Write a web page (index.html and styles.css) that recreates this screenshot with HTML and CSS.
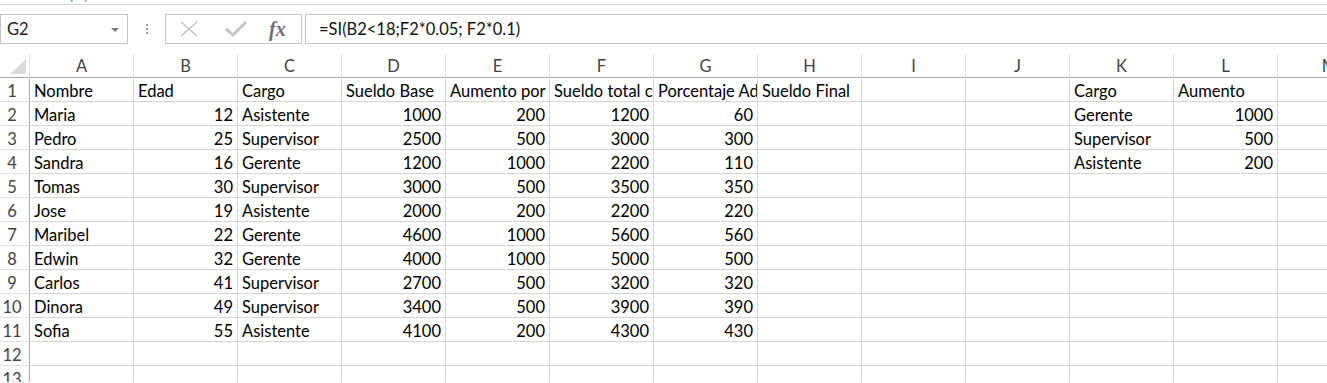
FILE: index.html
```
<html>
<head>
<link rel="stylesheet" href="styles.css">
</head>
<body>
<div class="ribbonEdge"><span class="ribbonLabel">Portapapeles</span></div>

<div class="formulaBar">
  <div class="nameBox">G2<span class="nameArrow"></span></div>
  <div class="grip"><span></span><span></span><span></span></div>
  <div class="fxBox">
    <svg class="fxIcon" width="18" height="16" viewBox="0 0 18 16"><path d="M1 1 L17 15 M17 1 L1 15" stroke="#c4c4c4" stroke-width="1.6" fill="none"/></svg>
    <svg class="fxIcon" width="22" height="16" viewBox="0 0 22 16"><path d="M1 8 L8 14 L21 1" stroke="#c4c4c4" stroke-width="3" fill="none"/></svg>
    <span class="fxText">fx</span>
  </div>
  <div class="formulaInput">=SI(B2&lt;18;F2*0.05; F2*0.1)</div>
</div>

<div class="sheetWrap">
<table class="sheet">
<tr class="colHeads"><th class="corner"><span class="cornerTri"></span></th><th>A</th><th>B</th><th>C</th><th>D</th><th>E</th><th>F</th><th>G</th><th>H</th><th>I</th><th>J</th><th>K</th><th>L</th><th>M</th></tr>
<tr><th class="rowHead">1</th><td>Nombre</td><td>Edad</td><td>Cargo</td><td>Sueldo Base</td><td>Aumento por cargo</td><td>Sueldo total con aumento</td><td>Porcentaje Adicional</td><td>Sueldo Final</td><td></td><td></td><td>Cargo</td><td>Aumento</td><td></td></tr>
<tr><th class="rowHead">2</th><td>Maria</td><td class="num">12</td><td>Asistente</td><td class="num">1000</td><td class="num">200</td><td class="num">1200</td><td class="num">60</td><td></td><td></td><td></td><td>Gerente</td><td class="num">1000</td><td></td></tr>
<tr><th class="rowHead">3</th><td>Pedro</td><td class="num">25</td><td>Supervisor</td><td class="num">2500</td><td class="num">500</td><td class="num">3000</td><td class="num">300</td><td></td><td></td><td></td><td>Supervisor</td><td class="num">500</td><td></td></tr>
<tr><th class="rowHead">4</th><td>Sandra</td><td class="num">16</td><td>Gerente</td><td class="num">1200</td><td class="num">1000</td><td class="num">2200</td><td class="num">110</td><td></td><td></td><td></td><td>Asistente</td><td class="num">200</td><td></td></tr>
<tr><th class="rowHead">5</th><td>Tomas</td><td class="num">30</td><td>Supervisor</td><td class="num">3000</td><td class="num">500</td><td class="num">3500</td><td class="num">350</td><td></td><td></td><td></td><td></td><td></td><td></td></tr>
<tr><th class="rowHead">6</th><td>Jose</td><td class="num">19</td><td>Asistente</td><td class="num">2000</td><td class="num">200</td><td class="num">2200</td><td class="num">220</td><td></td><td></td><td></td><td></td><td></td><td></td></tr>
<tr><th class="rowHead">7</th><td>Maribel</td><td class="num">22</td><td>Gerente</td><td class="num">4600</td><td class="num">1000</td><td class="num">5600</td><td class="num">560</td><td></td><td></td><td></td><td></td><td></td><td></td></tr>
<tr><th class="rowHead">8</th><td>Edwin</td><td class="num">32</td><td>Gerente</td><td class="num">4000</td><td class="num">1000</td><td class="num">5000</td><td class="num">500</td><td></td><td></td><td></td><td></td><td></td><td></td></tr>
<tr><th class="rowHead">9</th><td>Carlos</td><td class="num">41</td><td>Supervisor</td><td class="num">2700</td><td class="num">500</td><td class="num">3200</td><td class="num">320</td><td></td><td></td><td></td><td></td><td></td><td></td></tr>
<tr><th class="rowHead">10</th><td>Dinora</td><td class="num">49</td><td>Supervisor</td><td class="num">3400</td><td class="num">500</td><td class="num">3900</td><td class="num">390</td><td></td><td></td><td></td><td></td><td></td><td></td></tr>
<tr><th class="rowHead">11</th><td>Sofia</td><td class="num">55</td><td>Asistente</td><td class="num">4100</td><td class="num">200</td><td class="num">4300</td><td class="num">430</td><td></td><td></td><td></td><td></td><td></td><td></td></tr>
<tr><th class="rowHead">12</th><td></td><td></td><td></td><td></td><td></td><td></td><td></td><td></td><td></td><td></td><td></td><td></td><td></td></tr>
<tr><th class="rowHead">13</th><td></td><td></td><td></td><td></td><td></td><td></td><td></td><td></td><td></td><td></td><td></td><td></td><td></td></tr>
</table>
</div>
</body>
</html>
```

FILE: styles.css
```
* {
    box-sizing: border-box;
}

body {
    margin: 0;
    background-color: #ffffff;
    font-family: Lato, "Liberation Sans", sans-serif;
    overflow: hidden;
}

/* bottom of the ribbon, cut off by the screenshot */
.ribbonEdge {
    height: 5px;
    overflow: hidden;
    border-bottom: 1px solid #d4d4d4;
}

.ribbonLabel {
    display: block;
    margin-top: -13px;
    margin-left: 40px;
    font-family: "Open Sans", sans-serif;
    font-size: 12px;
    line-height: 16px;
    color: #666666;
}

.formulaBar {
    display: flex;
    height: 30px;
    margin-top: 9px;
}

.nameBox {
    position: relative;
    width: 128px;
    border: 1px solid #c6c6c6;
    padding-left: 6px;
    font-size: 16.5px;
    line-height: 28px;
    color: #222222;
}

.nameArrow {
    position: absolute;
    right: 8px;
    top: 13px;
    border-left: 4px solid transparent;
    border-right: 4px solid transparent;
    border-top: 4px solid #7a7a7a;
}

.grip {
    width: 37px;
    display: flex;
    flex-direction: column;
    align-items: center;
    justify-content: center;
    gap: 2px;
}

.grip span {
    width: 2px;
    height: 2px;
    background-color: #a0a0a0;
}

.fxBox {
    width: 137px;
    border: 1px solid #c6c6c6;
    display: flex;
    align-items: center;
    padding-left: 14px;
    gap: 27px;
}

.fxIcon {
    display: block;
}

.fxText {
    margin-left: -5px;
    font-family: "Liberation Serif", serif;
    font-style: italic;
    font-weight: bold;
    font-size: 20px;
    color: #707070;
}

.formulaInput {
    flex: 1;
    margin-left: 3px;
    border: 1px solid #c6c6c6;
    border-right: none;
    padding-left: 13px;
    font-size: 16.5px;
    line-height: 28px;
    color: #111111;
}

.sheetWrap {
    margin-top: 10px;
    height: 328px;
    overflow: hidden;
}

.sheet {
    border-spacing: 0;
    table-layout: fixed;
    width: 1382px;
}

.sheet th,
.sheet td {
    width: 104px;
    height: 24px;
    padding: 0;
    line-height: 19px;
    border-right: 1px solid #d4d4d4;
    border-bottom: 1px solid #d4d4d4;
    white-space: nowrap;
    overflow: hidden;
}

.sheet td {
    padding-left: 4px;
    padding-top: 4px;
    font-size: 16.5px;
    color: #000000;
}

.sheet td.num {
    text-align: right;
    padding-left: 0;
    padding-right: 4px;
}

.colHeads th {
    padding-top: 2px;
    font-weight: normal;
    font-size: 16.5px;
    color: #444444;
    text-align: center;
    border-right-color: #e1e1e1;
    border-bottom-color: #ababab;
}

.sheet th.rowHead {
    width: 30px;
    padding-top: 4px;
    padding-right: 5px;
    font-weight: normal;
    font-size: 16.5px;
    color: #444444;
    text-align: center;
    border-right-color: #ababab;
    border-bottom-color: #e1e1e1;
}

.sheet th.corner {
    width: 30px;
    position: relative;
    border-right-color: #e1e1e1;
}

.cornerTri {
    position: absolute;
    left: 10px;
    top: 5px;
    width: 0;
    height: 0;
    border-left: 16px solid transparent;
    border-bottom: 15px solid #dadada;
}
```
